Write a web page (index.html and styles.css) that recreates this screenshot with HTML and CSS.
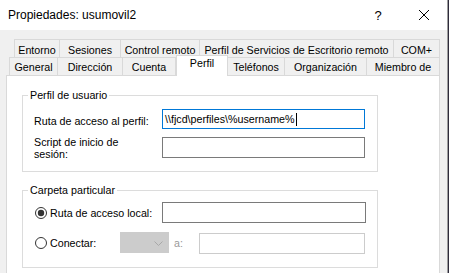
FILE: index.html
```html
<!DOCTYPE html>
<html>

<head>
    <title>Propiedades: usumovil2</title>
    <link rel="stylesheet" href="styles.css">
</head>

<body>
    <div class="window">
        <!-- Title bar -->
        <div class="titlebar">
            <span class="title">Propiedades: usumovil2</span>
            <span class="caption-btn help">?</span>
            <span class="caption-btn close">
                <svg width="10" height="10" viewBox="0 0 10 10">
                    <path d="M0 0 L10 10 M10 0 L0 10" stroke="#000" stroke-width="1" fill="none"/>
                </svg>
            </span>
        </div>

        <!-- Tabs -->
        <div class="tabs">
            <div class="tab-row row-back">
                <div class="tab t-entorno">Entorno</div>
                <div class="tab t-sesiones">Sesiones</div>
                <div class="tab t-control">Control remoto</div>
                <div class="tab t-servicios">Perfil de Servicios de Escritorio remoto</div>
                <div class="tab t-com">COM+</div>
            </div>
            <div class="tab-row row-front">
                <div class="tab t-general">General</div>
                <div class="tab t-direccion">Dirección</div>
                <div class="tab t-cuenta">Cuenta</div>
                <div class="tab t-perfil active">Perfil</div>
                <div class="tab t-telefonos">Teléfonos</div>
                <div class="tab t-organizacion">Organización</div>
                <div class="tab t-miembro">Miembro de</div>
            </div>
        </div>

        <div class="panel">
            <fieldset class="group group-user">
                <legend>Perfil de usuario</legend>
                <div class="field first">
                    <label class="field-label">Ruta de acceso al perfil:</label>
                    <div class="textbox focused">\\fjcd\perfiles\%username%<span class="caret"></span></div>
                </div>
                <div class="field second">
                    <label class="field-label two-lines">Script de inicio de<br>sesión:</label>
                    <div class="textbox tall"></div>
                </div>
            </fieldset>

            <fieldset class="group group-home">
                <legend>Carpeta particular</legend>
                <div class="field radio-row first">
                    <label class="radio-label wide">
                        <svg class="radio" width="12" height="12" viewBox="0 0 12 12">
                            <circle cx="6" cy="6" r="5.5" fill="#fff" stroke="#333"/>
                            <circle cx="6" cy="6" r="3.2" fill="#333"/>
                        </svg>
                        Ruta de acceso local:
                    </label>
                    <div class="textbox tall wide-box"></div>
                </div>
                <div class="field radio-row second">
                    <label class="radio-label narrow">
                        <svg class="radio" width="12" height="12" viewBox="0 0 12 12">
                            <circle cx="6" cy="6" r="5.5" fill="#fff" stroke="#333"/>
                        </svg>
                        Conectar:
                    </label>
                    <div class="combo">
                        <svg width="9" height="5" viewBox="0 0 9 5">
                            <path d="M0.5 0.5 L4.5 4.5 L8.5 0.5" stroke="#a8a8a8" fill="none"/>
                        </svg>
                    </div>
                    <span class="to-label">a:</span>
                    <div class="textbox tall disabled"></div>
                </div>
            </fieldset>
        </div>
    </div>
</body>

</html>
```
FILE: styles.css
```css
body {
    margin: 0;
    width: 449px;
    height: 273px;
    overflow: hidden;
    background-color: #2e2b3c;
    font-family: "Liberation Sans", Arial, sans-serif;
    color: #000;
}

.window {
    width: 447px;
    height: 273px;
    background-color: #f0f0f0;
    border-right: 1px solid #9d9d9d;
}

/* Title bar */
.titlebar {
    height: 30px;
    background-color: #ffffff;
    display: flex;
    align-items: center;
}

.title {
    flex: 1;
    margin-left: 8px;
    font-size: 12px;
}

.caption-btn {
    width: 46px;
    height: 30px;
    display: flex;
    align-items: center;
    justify-content: center;
}

.help {
    font-size: 13px;
}

/* Tabs */
.tabs {
    margin-top: 9px;
}

.tab-row {
    display: flex;
    height: 18px;
}

.row-back {
    padding-left: 14px;
}

.row-front {
    padding-left: 9px;
}

.tab {
    box-sizing: border-box;
    height: 18px;
    border: 1px solid #d9d9d9;
    border-bottom: none;
    margin-right: -1px;
    font-size: 10.7px;
    line-height: 14px;
    padding-top: 2px;
    text-align: center;
    white-space: nowrap;
}

.row-back .tab {
    padding-top: 3px;
}

.t-entorno { width: 46px; }
.t-sesiones { width: 62px; }
.t-control { width: 80px; }
.t-servicios { width: 195px; }
.t-com { width: 47px; }

.t-general { width: 49px; }
.t-direccion { width: 66px; }
.t-cuenta { width: 54px; }
.t-perfil { width: 52px; }
.t-telefonos { width: 58px; }
.t-organizacion { width: 83px; }
.t-miembro { width: 74px; }

.tab.active {
    background-color: #ffffff;
    height: 21px;
    margin-top: -2px;
    margin-left: 1px;
    padding-top: 0;
    position: relative;
    z-index: 1;
}

/* Page */
.panel {
    box-sizing: border-box;
    margin-left: 6px;
    width: 434px;
    height: 200px;
    border: 1px solid #d9d9d9;
    background-color: #ffffff;
    font-size: 10.7px;
}

.group {
    box-sizing: border-box;
    width: 356px;
    margin: 0 0 0 15px;
    padding: 0 0 0 11px;
    border: 1px solid #dcdcdc;
    min-width: 0;
}

.group legend {
    padding: 0 2px;
    margin-left: -6px;
    line-height: 13px;
}

.group-user {
    margin-top: 13px;
    height: 83px;
}

.group-home {
    margin-top: 12px;
    height: 84px;
}

.field {
    display: flex;
    align-items: flex-start;
}

.group-user .first {
    margin-top: 7px;
}

.group-user .second {
    margin-top: 8px;
}

.field-label {
    width: 128px;
    line-height: 12px;
    padding-top: 6px;
}

.field-label.two-lines {
    padding-top: 0;
    margin-top: -1px;
}

.textbox {
    box-sizing: border-box;
    width: 203px;
    height: 20px;
    border: 1px solid #7a7a7a;
    padding-left: 2px;
    line-height: 18px;
    white-space: nowrap;
    background-color: #ffffff;
}

.textbox.tall {
    height: 21px;
}

.textbox.focused {
    border-color: #0078d7;
}

.caret {
    display: inline-block;
    width: 1px;
    height: 13px;
    margin-left: 1px;
    background-color: #000;
    vertical-align: -3px;
}

/* Radio rows */
.radio-row {
    align-items: center;
}

.group-home .first {
    margin-top: 5px;
}

.group-home .second {
    margin-top: 8px;
}

.radio-label {
    display: flex;
    align-items: center;
    gap: 3px;
    line-height: 12px;
}

.radio {
    margin-left: 1px;
    flex-shrink: 0;
}

.radio-label.wide {
    width: 128px;
}

.radio-label.narrow {
    width: 86px;
}

.textbox.wide-box {
    width: 204px;
}

.combo {
    box-sizing: border-box;
    width: 49px;
    height: 21px;
    background-color: #cccccc;
    border: 1px solid #cccccc;
    display: flex;
    align-items: center;
    justify-content: flex-end;
    padding-right: 5px;
    padding-top: 1px;
}

.to-label {
    width: 25px;
    margin-left: 5px;
    color: #999999;
}

.textbox.disabled {
    width: 166px;
    border-color: #cccccc;
    margin-top: 2px;
}
```
